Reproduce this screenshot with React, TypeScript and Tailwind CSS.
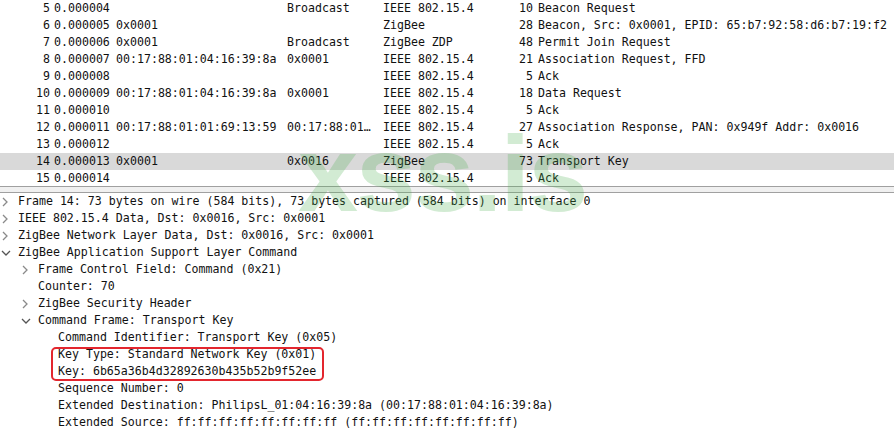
const mono = "font-['DejaVu_Sans_Mono',monospace] text-[11.6px] text-[#111]";

const packets = [
  ["5", "0.000004", "", "Broadcast", "IEEE 802.15.4", "10", "Beacon Request"],
  ["6", "0.000005", "0x0001", "", "ZigBee", "28", "Beacon, Src: 0x0001, EPID: 65:b7:92:58:d6:b7:19:f2"],
  ["7", "0.000006", "0x0001", "Broadcast", "ZigBee ZDP", "48", "Permit Join Request"],
  ["8", "0.000007", "00:17:88:01:04:16:39:8a", "0x0001", "IEEE 802.15.4", "21", "Association Request, FFD"],
  ["9", "0.000008", "", "", "IEEE 802.15.4", "5", "Ack"],
  ["10", "0.000009", "00:17:88:01:04:16:39:8a", "0x0001", "IEEE 802.15.4", "18", "Data Request"],
  ["11", "0.000010", "", "", "IEEE 802.15.4", "5", "Ack"],
  ["12", "0.000011", "00:17:88:01:01:69:13:59", "00:17:88:01…", "IEEE 802.15.4", "27", "Association Response, PAN: 0x949f Addr: 0x0016"],
  ["13", "0.000012", "", "", "IEEE 802.15.4", "5", "Ack"],
  ["14", "0.000013", "0x0001", "0x0016", "ZigBee", "73", "Transport Key"],
  ["15", "0.000014", "", "", "IEEE 802.15.4", "5", "Ack"],
];

type Node = { level: number; arrow?: "right" | "down"; text: string };

const details: Node[] = [
  { level: 0, arrow: "right", text: "Frame 14: 73 bytes on wire (584 bits), 73 bytes captured (584 bits) on interface 0" },
  { level: 0, arrow: "right", text: "IEEE 802.15.4 Data, Dst: 0x0016, Src: 0x0001" },
  { level: 0, arrow: "right", text: "ZigBee Network Layer Data, Dst: 0x0016, Src: 0x0001" },
  { level: 0, arrow: "down", text: "ZigBee Application Support Layer Command" },
  { level: 1, arrow: "right", text: "Frame Control Field: Command (0x21)" },
  { level: 1, text: "Counter: 70" },
  { level: 1, arrow: "right", text: "ZigBee Security Header" },
  { level: 1, arrow: "down", text: "Command Frame: Transport Key" },
  { level: 2, text: "Command Identifier: Transport Key (0x05)" },
];

const afterKey: Node[] = [
  { level: 2, text: "Sequence Number: 0" },
  { level: 2, text: "Extended Destination: PhilipsL_01:04:16:39:8a (00:17:88:01:04:16:39:8a)" },
  { level: 2, text: "Extended Source: ff:ff:ff:ff:ff:ff:ff:ff (ff:ff:ff:ff:ff:ff:ff:ff)" },
];

function Arrow({ dir }: { dir: "right" | "down" }) {
  return dir === "right" ? (
    <svg width="8" height="10" viewBox="0 0 8 10" className="shrink-0">
      <polyline points="2,1 6,5 2,9" fill="none" stroke="#8a8a8a" strokeWidth="1.3" />
    </svg>
  ) : (
    <svg width="10" height="8" viewBox="0 0 10 8" className="shrink-0">
      <polyline points="1,2 5,6 9,2" fill="none" stroke="#555" strokeWidth="1.3" />
    </svg>
  );
}

function TreeRow({ n }: { n: Node }) {
  const indent = ["pl-[18px]", "pl-[38px]", "pl-[58px]"][n.level];
  return (
    <div className={`relative h-[17px] flex items-center whitespace-nowrap ${indent}`}>
      {n.arrow && (
        <span className={`absolute top-0 h-[17px] flex items-center ${n.level === 0 ? "left-[1px]" : "left-[21px]"}`}>
          <Arrow dir={n.arrow} />
        </span>
      )}
      {n.text}
    </div>
  );
}

export default function App() {
  return (
    <div className={`relative w-[894px] h-[436px] overflow-hidden bg-white ${mono}`}>
      {/* packet list */}
      <div className="h-[186px] overflow-hidden">
        {packets.map((p) => (
          <div
            key={p[0]}
            className={`h-[17px] flex items-center whitespace-nowrap ${p[0] === "14" ? "bg-[#d9d9d9]" : ""}`}
          >
            <span className="w-[50px] text-right">{p[0]}</span>
            <span className="w-[66px] pl-[4px]">{p[1]}</span>
            <span className="w-[171px]">{p[2]}</span>
            <span className="w-[96px]">{p[3]}</span>
            <span className="w-[120px]">{p[4]}</span>
            <span className="w-[30px] text-right">{p[5]}</span>
            <span className="pl-[5px]">{p[6]}</span>
          </div>
        ))}
      </div>
      <div className="h-[7px] border-y border-[#a0a0a0] bg-[#f0f0f0]" />

      {/* packet details */}
      <div>
        {details.map((n, i) => (
          <TreeRow key={i} n={n} />
        ))}
        <div className="relative">
          <TreeRow n={{ level: 2, text: "Key Type: Standard Network Key (0x01)" }} />
          <TreeRow n={{ level: 2, text: "Key: 6b65a36b4d32892630b435b52b9f52ee" }} />
          <div className="pointer-events-none absolute top-[1px] bottom-[-1px] left-[51px] w-[273px] border-2 border-[#e3262e] rounded-[5px]" />
        </div>
        {afterKey.map((n, i) => (
          <TreeRow key={i} n={n} />
        ))}
      </div>

      {/* watermark */}
      <div className="pointer-events-none absolute left-[298px] top-[120px] font-['Liberation_Sans',sans-serif] font-bold text-[108px] leading-none text-[#4caf50]/25 tracking-[-2px]">
        xss.is
      </div>
    </div>
  );
}
